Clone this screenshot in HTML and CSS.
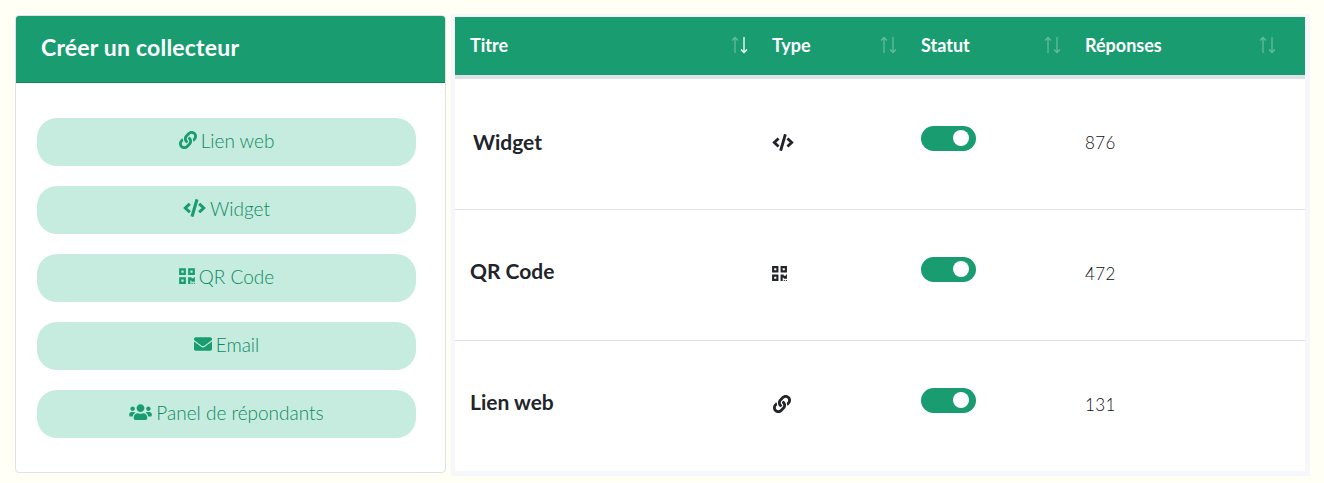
FILE: index.html
```html
<!DOCTYPE html>
<html lang="fr">
<head>
<meta charset="utf-8">
<title>Collecteurs</title>
<link rel="stylesheet" href="styles.css">
</head>
<body>
<svg class="defs" aria-hidden="true">
  <symbol id="i-link" viewBox="0 0 512 512"><path d="M326.612 185.391c59.747 59.809 58.927 155.698.36 214.59-.11.12-.24.25-.36.37l-67.2 67.2c-59.27 59.27-155.699 59.262-214.96 0-59.27-59.26-59.27-155.7 0-214.96l37.106-37.106c9.84-9.84 26.786-3.3 27.294 10.606.648 17.722 3.826 35.527 9.69 52.721 1.986 5.822.567 12.262-3.783 16.612l-13.087 13.087c-28.026 28.026-28.905 73.66-1.155 101.96 28.024 28.579 74.086 28.749 102.325.51l67.2-67.19c28.191-28.191 28.073-73.757 0-101.83-3.701-3.694-7.429-6.564-10.341-8.569a16.037 16.037 0 0 1-6.947-12.606c-.396-10.567 3.348-21.456 11.698-29.806l21.054-21.055c5.521-5.521 14.182-6.199 20.584-1.731a152.482 152.482 0 0 1 20.522 17.197zM467.547 44.449c-59.261-59.262-155.69-59.27-214.96 0l-67.2 67.2c-.12.12-.25.25-.36.37-58.566 58.892-59.387 154.781.36 214.59a152.454 152.454 0 0 0 20.521 17.196c6.402 4.468 15.064 3.789 20.584-1.731l21.054-21.055c8.35-8.35 12.094-19.239 11.698-29.806a16.037 16.037 0 0 0-6.947-12.606c-2.912-2.005-6.64-4.875-10.341-8.569-28.073-28.073-28.191-73.639 0-101.83l67.2-67.19c28.239-28.239 74.3-28.069 102.325.51 27.75 28.3 26.872 73.934-1.155 101.96l-13.087 13.087c-4.35 4.35-5.769 10.79-3.783 16.612 5.864 17.194 9.042 34.999 9.69 52.721.509 13.906 17.454 20.446 27.294 10.606l37.106-37.106c59.271-59.259 59.271-155.699.001-214.959z"/></symbol>
  <symbol id="i-code" viewBox="0 0 640 512"><path d="M278.9 511.5l-61-17.7c-6.4-1.8-10-8.5-8.2-14.9L346.2 8.7c1.8-6.4 8.5-10 14.9-8.2l61 17.7c6.4 1.8 10 8.5 8.2 14.9L293.8 503.3c-1.9 6.4-8.5 10.1-14.9 8.2zm-114-112.2l43.5-46.4c4.6-4.9 4.3-12.7-.8-17.2L117 256l90.6-79.7c5.1-4.5 5.5-12.3.8-17.2l-43.5-46.4c-4.5-4.8-12.1-5.1-17-.5L3.8 247.2c-5.1 4.7-5.1 12.8 0 17.5l144.1 135.1c4.9 4.6 12.5 4.4 17-.5zm327.2.6l144.1-135.1c5.1-4.7 5.1-12.8 0-17.5L492.1 112.1c-4.8-4.5-12.4-4.3-17 .5L431.6 159c-4.6 4.9-4.3 12.7.8 17.2L523 256l-90.6 79.7c-5.1 4.5-5.5 12.3-.8 17.2l43.5 46.4c4.5 4.9 12.1 5.1 17 .6z"/></symbol>
  <symbol id="i-qr" viewBox="0 0 448 512"><path d="M0 224h192V32H0v192zM64 96h64v64H64V96zm192-64v192h192V32H256zm128 128h-64V96h64v64zM0 480h192V288H0v192zm64-128h64v64H64v-64zm352-64h32v128h-96v-32h-32v96h-64V288h96v32h64v-32zm0 160h32v32h-32v-32zm-64 0h32v32h-32v-32z"/></symbol>
  <symbol id="i-mail" viewBox="0 0 512 512"><path d="M502.3 190.8c3.9-3.1 9.7-.2 9.7 4.7V400c0 26.5-21.5 48-48 48H48c-26.5 0-48-21.5-48-48V195.6c0-5 5.7-7.8 9.7-4.7 22.4 17.4 52.1 39.5 154.1 113.6 21.1 15.4 56.7 47.8 92.2 47.6 35.7.3 72-32.8 92.3-47.6 102-74.1 131.6-96.3 154-113.7zM256 320c23.2.4 56.6-29.2 73.4-41.4 132.7-96.3 142.8-104.7 173.4-128.7 5.8-4.5 9.2-11.5 9.2-18.9v-19c0-26.5-21.5-48-48-48H48C21.5 64 0 85.5 0 112v19c0 7.4 3.4 14.3 9.2 18.9 30.6 23.9 40.7 32.4 173.4 128.7 16.8 12.2 50.2 41.8 73.4 41.4z"/></symbol>
  <symbol id="i-users" viewBox="0 0 640 512"><path d="M96 224c35.3 0 64-28.7 64-64s-28.7-64-64-64-64 28.7-64 64 28.7 64 64 64zm448 0c35.3 0 64-28.7 64-64s-28.7-64-64-64-64 28.7-64 64 28.7 64 64 64zm32 32h-64c-17.6 0-33.5 7.1-45.1 18.6 40.3 22.1 68.9 62 75.1 109.4h66c17.7 0 32-14.3 32-32v-32c0-35.3-28.7-64-64-64zm-256 0c61.9 0 112-50.1 112-112S381.9 32 320 32 208 82.1 208 144s50.1 112 112 112zm76.8 32h-8.3c-20.8 10-43.9 16-68.5 16s-47.6-6-68.5-16h-8.3C179.6 288 128 339.6 128 403.2V432c0 26.5 21.5 48 48 48h288c26.5 0 48-21.5 48-48v-28.8c0-63.6-51.6-115.2-115.2-115.2zm-223.7-13.4C161.5 263.1 145.6 256 128 256H64c-35.3 0-64 28.7-64 64v32c0 17.7 14.3 32 32 32h65.9c6.3-47.4 34.9-87.3 75.2-109.4z"/></symbol>
  <symbol id="i-up" viewBox="0 0 8 18"><path d="M4 1.5V17M1 4.5 4 1.5 7 4.5" fill="none" stroke="currentColor" stroke-width="1.3"/></symbol>
  <symbol id="i-down" viewBox="0 0 8 18"><path d="M4 1V16.5M1 13.5 4 16.5 7 13.5" fill="none" stroke="currentColor" stroke-width="1.3"/></symbol>
</svg>

<main class="page">
  <section class="card">
    <h1 class="card-title">Créer un collecteur</h1>
    <div class="card-body">
      <a class="btn" href="#"><svg class="ico ico-link"><use href="#i-link"/></svg>Lien web</a>
      <a class="btn" href="#"><svg class="ico ico-code"><use href="#i-code"/></svg>Widget</a>
      <a class="btn" href="#"><svg class="ico ico-qr"><use href="#i-qr"/></svg>QR Code</a>
      <a class="btn" href="#"><svg class="ico ico-mail"><use href="#i-mail"/></svg>Email</a>
      <a class="btn" href="#"><svg class="ico ico-users"><use href="#i-users"/></svg>Panel de répondants</a>
    </div>
  </section>

  <section class="panel">
    <table class="table">
      <colgroup><col class="c1"><col class="c2"><col class="c3"><col class="c4"></colgroup>
      <thead>
        <tr>
          <th><div class="th"><span>Titre</span><span class="sort"><svg class="faded"><use href="#i-up"/></svg><svg class="solid"><use href="#i-down"/></svg></span></div></th>
          <th><div class="th"><span>Type</span><span class="sort"><svg class="faded"><use href="#i-up"/></svg><svg class="faded"><use href="#i-down"/></svg></span></div></th>
          <th><div class="th"><span>Statut</span><span class="sort"><svg class="faded"><use href="#i-up"/></svg><svg class="faded"><use href="#i-down"/></svg></span></div></th>
          <th><div class="th"><span>Réponses</span><span class="sort sort-last"><svg class="faded"><use href="#i-up"/></svg><svg class="faded"><use href="#i-down"/></svg></span></div></th>
        </tr>
      </thead>
      <tbody>
        <tr>
          <td class="name name-first">Widget</td>
          <td><svg class="type type-code"><use href="#i-code"/></svg></td>
          <td><span class="toggle"><span class="knob"></span></span></td>
          <td class="num">876</td>
        </tr>
        <tr>
          <td class="name">QR Code</td>
          <td><svg class="type type-qr"><use href="#i-qr"/></svg></td>
          <td><span class="toggle"><span class="knob"></span></span></td>
          <td class="num">472</td>
        </tr>
        <tr>
          <td class="name">Lien web</td>
          <td><svg class="type type-link"><use href="#i-link"/></svg></td>
          <td><span class="toggle"><span class="knob"></span></span></td>
          <td class="num">131</td>
        </tr>
      </tbody>
    </table>
  </section>
</main>
</body>
</html>
```

FILE: styles.css
```css
* { box-sizing: border-box; }
html, body { margin: 0; height: 100%; }
body {
  background: #fffff6;
  font-family: "Lato", "Noto Sans", sans-serif;
  color: #212529;
  overflow: hidden;
}
.defs { width: 0; height: 0; display: block; }

.page {
  display: flex;
  align-items: flex-start;
  gap: 5px;
  padding: 14px 0 0 15px;
}

.card {
  flex: 0 0 431px;
  height: 458px;
  margin-top: 1px;
  background: #fff;
  border: 1px solid #dfe2e8;
  border-radius: 4px;
  overflow: hidden;
}
.card-title {
  margin: 0;
  height: 67px;
  padding: 0 25px 4px;
  display: flex;
  align-items: center;
  background: #199c6f;
  border-bottom: 1px solid #16855f;
  color: #fff;
  font-size: 23px;
  letter-spacing: .2px;
  font-weight: 700;
}
.card-body {
  display: flex;
  flex-direction: column;
  gap: 20px;
  padding: 35px 29px 0 21px;
}
.btn {
  height: 48px;
  border-radius: 20px;
  background: #c5ecdf;
  color: #0f8a5f;
  font-size: 19px;
  font-weight: 300;
  text-decoration: none;
  display: flex;
  align-items: center;
  justify-content: center;
  gap: 4px;
  padding-bottom: 4px;
}
.ico { fill: #199c6f; display: block; }
.ico-link { width: 18px; height: 18px; }
.ico-code { width: 23px; height: 18px; }
.ico-qr { width: 16px; height: 18px; }
.ico-mail { width: 18px; height: 18px; }
.ico-users { width: 23px; height: 18px; }

.panel {
  flex: 0 0 859px;
  height: 462px;
  padding: 3px 5px 4px 4px;
  background: #f5f7fb;
}
.table {
  width: 850px;
  border-collapse: separate;
  border-spacing: 0;
  table-layout: fixed;
  background: #fff;
}
.c1 { width: 302px; }
.c2 { width: 149px; }
.c3 { width: 164px; }
.c4 { width: 235px; }

th {
  height: 62px;
  padding: 0 15px;
  background: #199c6f;
  border-bottom: 4px solid #dee2e6;
  color: #fff;
  font-size: 18px;
  font-weight: 700;
  text-align: left;
}
.th {
  display: flex;
  align-items: center;
  justify-content: space-between;
  padding-bottom: 2px;
}
.sort { display: flex; gap: 1px; margin-right: -6px; }
.sort-last { margin-right: 14px; }
.sort svg { width: 8px; height: 18px; display: block; }
.sort .faded { color: rgba(255, 255, 255, .32); }
.sort .solid { color: #fff; }

td {
  height: 131px;
  padding: 0 15px;
  border-bottom: 1px solid #dee2e6;
  font-size: 16px;
}
tbody tr:last-child td { border-bottom: 0; height: 130px; }
.name { font-size: 21px; font-weight: 700; padding-bottom: 9px; color: #212529; }
.name-first { padding-left: 18px; padding-bottom: 5px; }
.num { font-size: 17px; font-weight: 300; letter-spacing: .4px; padding-bottom: 4px; color: #0d0f11; }
.type { display: block; fill: #212529; margin-top: -4px; }
.type-code { width: 22px; height: 17px; }
.type-qr { width: 15px; height: 17px; }
.type-link { width: 20px; height: 18px; }
.toggle {
  display: flex;
  justify-content: flex-end;
  align-items: center;
  width: 55px;
  height: 25px;
  padding-right: 7px;
  margin-bottom: 12px;
  border-radius: 13px;
  background: #199c6f;
}
.knob { width: 16px; height: 16px; border-radius: 50%; background: #fff; }
```
